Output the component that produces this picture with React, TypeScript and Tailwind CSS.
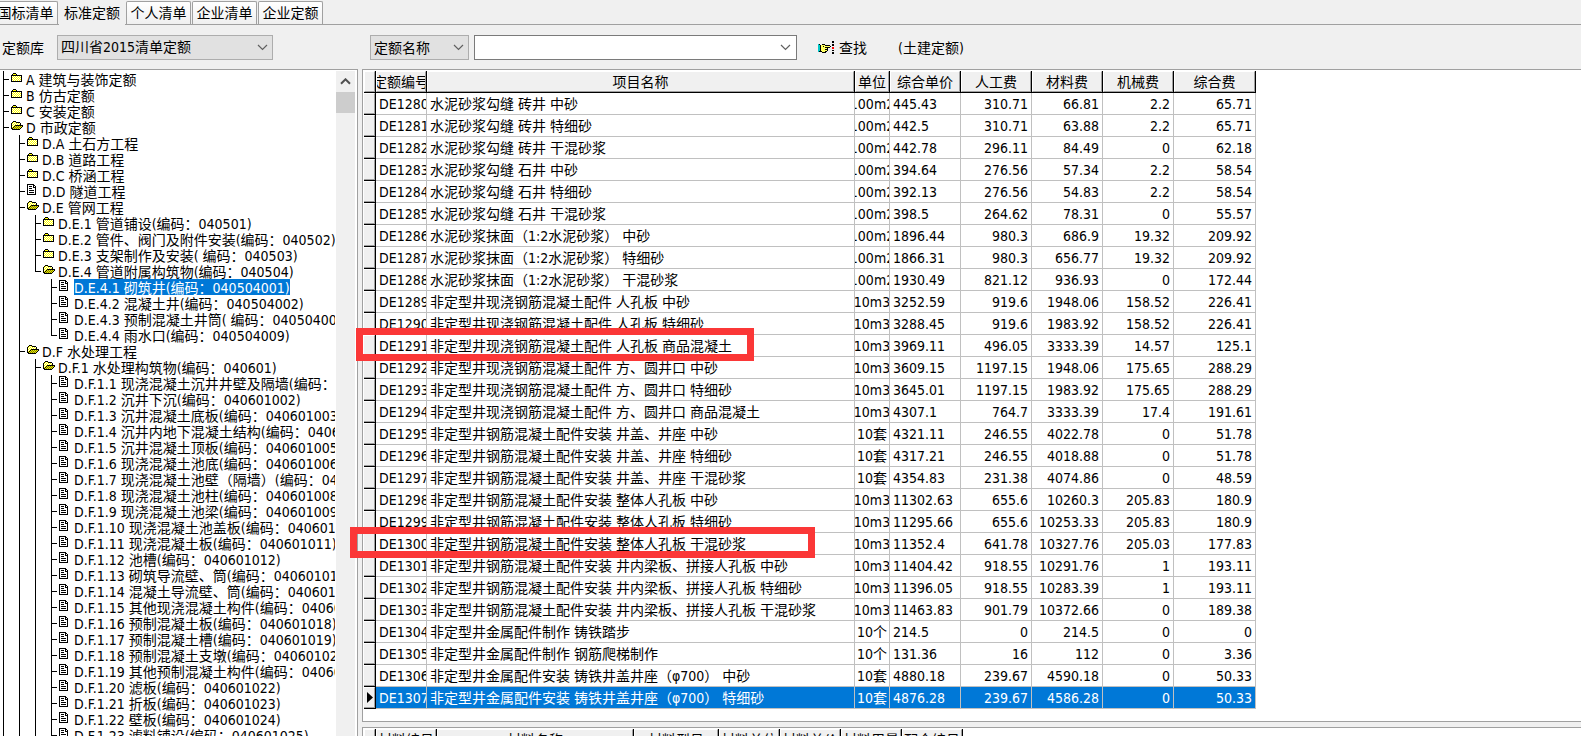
import React, { useState } from "react";

type IconKind = "folder" | "open" | "doc";

interface TreeRow {
  text: string;
  icon: IconKind;
  /** One entry per ancestor level: whether its guide line continues past this row. */
  guides: boolean[];
  last?: boolean;
  selected?: boolean;
}

const underD = [true];
const underDE4 = [true, true, false];
const underDF1 = [true, true, true];

const treeRows: TreeRow[] = [
  { text: "A 建筑与装饰定额", icon: "folder", guides: [] },
  { text: "B 仿古定额", icon: "folder", guides: [] },
  { text: "C 安装定额", icon: "folder", guides: [] },
  { text: "D 市政定额", icon: "open", guides: [] },
  { text: "D.A 土石方工程", icon: "folder", guides: underD },
  { text: "D.B 道路工程", icon: "folder", guides: underD },
  { text: "D.C 桥涵工程", icon: "folder", guides: underD },
  { text: "D.D 隧道工程", icon: "doc", guides: underD },
  { text: "D.E 管网工程", icon: "open", guides: underD },
  { text: "D.E.1 管道铺设(编码：040501)", icon: "folder", guides: [true, true] },
  { text: "D.E.2 管件、阀门及附件安装(编码：040502)", icon: "folder", guides: [true, true] },
  { text: "D.E.3 支架制作及安装( 编码：040503)", icon: "folder", guides: [true, true] },
  { text: "D.E.4 管道附属构筑物(编码：040504)", icon: "open", guides: [true, true], last: true },
  { text: "D.E.4.1 砌筑井(编码：040504001)", icon: "doc", guides: underDE4, selected: true },
  { text: "D.E.4.2 混凝土井(编码：040504002)", icon: "doc", guides: underDE4 },
  { text: "D.E.4.3 预制混凝土井筒( 编码：040504003)", icon: "doc", guides: underDE4 },
  { text: "D.E.4.4 雨水口(编码：040504009)", icon: "doc", guides: underDE4, last: true },
  { text: "D.F 水处理工程", icon: "open", guides: underD },
  { text: "D.F.1 水处理构筑物(编码：040601)", icon: "open", guides: [true, true] },
  { text: "D.F.1.1 现浇混凝土沉井井壁及隔墙(编码：040601001)", icon: "doc", guides: underDF1 },
  { text: "D.F.1.2 沉井下沉(编码：040601002)", icon: "doc", guides: underDF1 },
  { text: "D.F.1.3 沉井混凝土底板(编码：040601003)", icon: "doc", guides: underDF1 },
  { text: "D.F.1.4 沉井内地下混凝土结构(编码：040601004)", icon: "doc", guides: underDF1 },
  { text: "D.F.1.5 沉井混凝土顶板(编码：040601005)", icon: "doc", guides: underDF1 },
  { text: "D.F.1.6 现浇混凝土池底(编码：040601006)", icon: "doc", guides: underDF1 },
  { text: "D.F.1.7 现浇混凝土池壁（隔墙）(编码：040601007)", icon: "doc", guides: underDF1 },
  { text: "D.F.1.8 现浇混凝土池柱(编码：040601008)", icon: "doc", guides: underDF1 },
  { text: "D.F.1.9 现浇混凝土池梁(编码：040601009)", icon: "doc", guides: underDF1 },
  { text: "D.F.1.10 现浇混凝土池盖板(编码：040601010)", icon: "doc", guides: underDF1 },
  { text: "D.F.1.11 现浇混凝土板(编码：040601011)", icon: "doc", guides: underDF1 },
  { text: "D.F.1.12 池槽(编码：040601012)", icon: "doc", guides: underDF1 },
  { text: "D.F.1.13 砌筑导流壁、筒(编码：040601013)", icon: "doc", guides: underDF1 },
  { text: "D.F.1.14 混凝土导流壁、筒(编码：040601014)", icon: "doc", guides: underDF1 },
  { text: "D.F.1.15 其他现浇混凝土构件(编码：040601017)", icon: "doc", guides: underDF1 },
  { text: "D.F.1.16 预制混凝土板(编码：040601018)", icon: "doc", guides: underDF1 },
  { text: "D.F.1.17 预制混凝土槽(编码：040601019)", icon: "doc", guides: underDF1 },
  { text: "D.F.1.18 预制混凝土支墩(编码：040601020)", icon: "doc", guides: underDF1 },
  { text: "D.F.1.19 其他预制混凝土构件(编码：040601021)", icon: "doc", guides: underDF1 },
  { text: "D.F.1.20 滤板(编码：040601022)", icon: "doc", guides: underDF1 },
  { text: "D.F.1.21 折板(编码：040601023)", icon: "doc", guides: underDF1 },
  { text: "D.F.1.22 壁板(编码：040601024)", icon: "doc", guides: underDF1 },
  { text: "D.F.1.23 滤料铺设(编码：040601025)", icon: "doc", guides: underDF1 },
];

type QuotaRow = [string, string, string, string, string, string, string, string];

const quotaRows: QuotaRow[] = [
  ["DE1280", "水泥砂浆勾缝 砖井 中砂", "100m2", "445.43", "310.71", "66.81", "2.2", "65.71"],
  ["DE1281", "水泥砂浆勾缝 砖井 特细砂", "100m2", "442.5", "310.71", "63.88", "2.2", "65.71"],
  ["DE1282", "水泥砂浆勾缝 砖井 干混砂浆", "100m2", "442.78", "296.11", "84.49", "0", "62.18"],
  ["DE1283", "水泥砂浆勾缝 石井 中砂", "100m2", "394.64", "276.56", "57.34", "2.2", "58.54"],
  ["DE1284", "水泥砂浆勾缝 石井 特细砂", "100m2", "392.13", "276.56", "54.83", "2.2", "58.54"],
  ["DE1285", "水泥砂浆勾缝 石井 干混砂浆", "100m2", "398.5", "264.62", "78.31", "0", "55.57"],
  ["DE1286", "水泥砂浆抹面（1:2水泥砂浆） 中砂", "100m2", "1896.44", "980.3", "686.9", "19.32", "209.92"],
  ["DE1287", "水泥砂浆抹面（1:2水泥砂浆） 特细砂", "100m2", "1866.31", "980.3", "656.77", "19.32", "209.92"],
  ["DE1288", "水泥砂浆抹面（1:2水泥砂浆） 干混砂浆", "100m2", "1930.49", "821.12", "936.93", "0", "172.44"],
  ["DE1289", "非定型井现浇钢筋混凝土配件 人孔板 中砂", "10m3", "3252.59", "919.6", "1948.06", "158.52", "226.41"],
  ["DE1290", "非定型井现浇钢筋混凝土配件 人孔板 特细砂", "10m3", "3288.45", "919.6", "1983.92", "158.52", "226.41"],
  ["DE1291", "非定型井现浇钢筋混凝土配件 人孔板 商品混凝土", "10m3", "3969.11", "496.05", "3333.39", "14.57", "125.1"],
  ["DE1292", "非定型井现浇钢筋混凝土配件 方、圆井口 中砂", "10m3", "3609.15", "1197.15", "1948.06", "175.65", "288.29"],
  ["DE1293", "非定型井现浇钢筋混凝土配件 方、圆井口 特细砂", "10m3", "3645.01", "1197.15", "1983.92", "175.65", "288.29"],
  ["DE1294", "非定型井现浇钢筋混凝土配件 方、圆井口 商品混凝土", "10m3", "4307.1", "764.7", "3333.39", "17.4", "191.61"],
  ["DE1295", "非定型井钢筋混凝土配件安装 井盖、井座 中砂", "10套", "4321.11", "246.55", "4022.78", "0", "51.78"],
  ["DE1296", "非定型井钢筋混凝土配件安装 井盖、井座 特细砂", "10套", "4317.21", "246.55", "4018.88", "0", "51.78"],
  ["DE1297", "非定型井钢筋混凝土配件安装 井盖、井座 干混砂浆", "10套", "4354.83", "231.38", "4074.86", "0", "48.59"],
  ["DE1298", "非定型井钢筋混凝土配件安装 整体人孔板 中砂", "10m3", "11302.63", "655.6", "10260.3", "205.83", "180.9"],
  ["DE1299", "非定型井钢筋混凝土配件安装 整体人孔板 特细砂", "10m3", "11295.66", "655.6", "10253.33", "205.83", "180.9"],
  ["DE1300", "非定型井钢筋混凝土配件安装 整体人孔板 干混砂浆", "10m3", "11352.4", "641.78", "10327.76", "205.03", "177.83"],
  ["DE1301", "非定型井钢筋混凝土配件安装 井内梁板、拼接人孔板 中砂", "10m3", "11404.42", "918.55", "10291.76", "1", "193.11"],
  ["DE1302", "非定型井钢筋混凝土配件安装 井内梁板、拼接人孔板 特细砂", "10m3", "11396.05", "918.55", "10283.39", "1", "193.11"],
  ["DE1303", "非定型井钢筋混凝土配件安装 井内梁板、拼接人孔板 干混砂浆", "10m3", "11463.83", "901.79", "10372.66", "0", "189.38"],
  ["DE1304", "非定型井金属配件制作 铸铁踏步", "10个", "214.5", "0", "214.5", "0", "0"],
  ["DE1305", "非定型井金属配件制作 钢筋爬梯制作", "10个", "131.36", "16", "112", "0", "3.36"],
  ["DE1306", "非定型井金属配件安装 铸铁井盖井座（φ700） 中砂", "10套", "4880.18", "239.67", "4590.18", "0", "50.33"],
  ["DE1307", "非定型井金属配件安装 铸铁井盖井座（φ700） 特细砂", "10套", "4876.28", "239.67", "4586.28", "0", "50.33"],
];

const quotaHeaders = ["定额编号", "项目名称", "单位", "综合单价", "人工费", "材料费", "机械费", "综合费"];
const materialHeaders = ["材料编号", "材料名称", "材料型号", "材料单位", "材料单价", "材料用量", "配合编号"];

const cellAlign = [
  "justify-start pl-[3px]",
  "justify-start pl-[3px]",
  "justify-center",
  "justify-start pl-[3px]",
  "justify-end pr-[3px]",
  "justify-end pr-[3px]",
  "justify-end pr-[3px]",
  "justify-end pr-[3px]",
];

function TreeIcon({ kind }: { kind: IconKind }) {
  if (kind === "doc") {
    return (
      <svg width="15" height="16" viewBox="0 0 15 16" shapeRendering="crispEdges" className="shrink-0" aria-hidden="true">
        <path fill="#fff" d="M1 2h6v1h1v1h1v8H1z" />
        <path
          fill="#000"
          d="M0 1h7v1H0zM0 1h1v11H0zM0 11h9v1H0zM8 4h1v8H8zM6 1h1v3H6zM6 4h3v1H6zM7 2h1v1H7zM8 3h1v1H8zM2 3h3v1H2zM2 5h3v1H2zM2 7h5v1H2zM2 9h5v1H2z"
        />
      </svg>
    );
  }
  if (kind === "open") {
    return (
      <svg width="15" height="16" viewBox="0 0 15 16" shapeRendering="crispEdges" className="shrink-0" aria-hidden="true">
        <path fill="url(#dither)" d="M1 3h4v1h4v2H4v1H3v1H2v1H1z" />
        <path
          fill="#000"
          d="M2 2h3v1H2zM1 3h1v1H1zM0 4h1v6H0zM5 3h4v1H5zM9 4h1v2H9zM4 6h8v1H4zM3 7h1v1H3zM2 8h1v1H2zM1 9h1v1H1zM11 7h1v1h-1zM10 8h1v1h-1zM9 9h1v1H9zM1 10h8v1H1z"
        />
        <path fill="#e8e800" d="M4 7h7v1H4zM3 8h7v1H3zM2 9h7v1H2z" />
        <path fill="#808000" d="M5 7h1v1H5zM7 7h1v1H7zM9 7h1v1H9zM4 8h1v1H4zM6 8h1v1H6zM8 8h1v1H8zM3 9h1v1H3zM5 9h1v1H5zM7 9h1v1H7z" />
      </svg>
    );
  }
  return (
    <svg width="15" height="16" viewBox="0 0 15 16" shapeRendering="crispEdges" className="shrink-0" aria-hidden="true">
      <rect x="1" y="4" width="9" height="7" fill="url(#dither)" />
      <rect x="2" y="3" width="3" height="1" fill="#ffff00" />
      <path fill="#000" d="M2 2h3v1H2zM1 3h1v1H1zM5 3h1v1H5zM1 4h9v1H1zM0 4h1v7H0zM10 4h1v7h-1zM0 10h11v1H0z" />
    </svg>
  );
}

function Chevron({ up = false, className = "" }: { up?: boolean; className?: string }) {
  return (
    <svg width="11" height="7" viewBox="0 0 11 7" className={className} aria-hidden="true">
      <path
        d={up ? "M1 5.8 5.5 1.3 10 5.8" : "M1 1 5.5 5.5 10 1"}
        fill="none"
        stroke={up ? "#505050" : "#606060"}
        strokeWidth={up ? 2 : 1.2}
      />
    </svg>
  );
}

function HandIcon() {
  return (
    <svg width="17" height="14" viewBox="0 0 17 14" shapeRendering="crispEdges" aria-hidden="true">
      <path fill="#00c8c8" d="M0 3h2v8H0z" />
      <path fill="#000" d="M1 3h1v1H1zM2 4h1v6H2zM1 10h2v1H1z" />
      <path fill="#ffff60" d="M3 4h4v1h5v1h-3v5H4v-1H3z" />
      <path
        fill="#000"
        d="M4 3h3v1H4zM7 4h5v1H7zM12 5h1v1h-1zM7 6h5v1H7zM9 7h1v1H9zM7 8h3v1H7zM9 9h1v1H9zM7 10h2v1H7zM4 11h4v1H4zM3 10h1v1H3zM5 5h1v1H5z"
      />
      <path fill="#000" d="M14 0h2v2h-2zM14 3h2v2h-2zM14 9h2v1h-2zM14 11h2v2h-2z" />
      <path fill="#f00" d="M14 6h2v2h-2z" />
    </svg>
  );
}

function TreeNode({ row }: { row: TreeRow }) {
  return (
    <li className="flex h-4 pl-[3px]" role="treeitem" aria-selected={!!row.selected}>
      {row.guides.map((on, i) => (
        <span key={i} className={on ? "w-4 shrink-0 border-l border-black" : "w-4 shrink-0"} />
      ))}
      <span className="flex w-2 shrink-0 flex-col">
        <span className="h-[9px] w-1.5 border-b border-l border-black" />
        <span className={row.last ? "flex-1" : "flex-1 border-l border-black"} />
      </span>
      <TreeIcon kind={row.icon} />
      <span className={row.selected ? "bg-[#0078d7] leading-[18px] whitespace-pre text-white" : "leading-[18px] whitespace-pre"}>
        {row.text}
      </span>
    </li>
  );
}

function HeaderCell({ children }: { children?: React.ReactNode }) {
  return (
    <th className="h-[22px] border-r border-b border-black bg-[#f0f0f0] p-0 font-normal">
      <div className="flex h-[21px] items-center justify-center overflow-hidden border-t border-r border-b border-l border-t-white border-r-[#a0a0a0] border-b-[#a0a0a0] border-l-white leading-none whitespace-nowrap">
        {children}
      </div>
    </th>
  );
}

function QuotaTable() {
  const [current, setCurrent] = useState("DE1307");
  return (
    <table className="w-[892px] table-fixed border-separate border-spacing-0">
      <colgroup>
        <col className="w-[12px]" />
        <col className="w-[51px]" />
        <col className="w-[428px]" />
        <col className="w-[35px]" />
        <col className="w-[71px]" />
        <col className="w-[71px]" />
        <col className="w-[71px]" />
        <col className="w-[71px]" />
        <col className="w-[82px]" />
      </colgroup>
      <thead>
        <tr>
          <HeaderCell />
          {quotaHeaders.map((h) => (
            <HeaderCell key={h}>{h}</HeaderCell>
          ))}
        </tr>
      </thead>
      <tbody>
        {quotaRows.map((row) => {
          const active = row[0] === current;
          return (
            <tr key={row[0]} onClick={() => setCurrent(row[0])} className={active ? "bg-[#0078d7] text-white" : "bg-white"}>
              <td className="h-[22px] border-r border-b border-black bg-[#f0f0f0] p-0">
                <div className="flex h-[21px] items-center border-t border-r border-b border-t-white border-r-[#a0a0a0] border-b-[#a0a0a0] pl-[3px]">
                  {active && (
                    <svg width="6" height="11" viewBox="0 0 6 11" aria-hidden="true">
                      <path d="M0 0 6 5.5 0 11z" fill="#000" />
                    </svg>
                  )}
                </div>
              </td>
              {row.map((value, i) => (
                <td key={i} className="h-[22px] border-r border-b border-[#c0c0c0] p-0">
                  <div className={`flex h-[21px] items-center overflow-hidden leading-none whitespace-pre ${cellAlign[i]}`}>
                    {value}
                  </div>
                </td>
              ))}
            </tr>
          );
        })}
      </tbody>
    </table>
  );
}

function MaterialTable() {
  return (
    <table className="w-[599px] table-fixed border-separate border-spacing-0">
      <colgroup>
        <col className="w-[12px]" />
        <col className="w-[61px]" />
        <col className="w-[197px]" />
        <col className="w-[85px]" />
        <col className="w-[61px]" />
        <col className="w-[61px]" />
        <col className="w-[61px]" />
        <col className="w-[61px]" />
      </colgroup>
      <thead>
        <tr>
          <HeaderCell />
          {materialHeaders.map((h) => (
            <HeaderCell key={h}>{h}</HeaderCell>
          ))}
        </tr>
      </thead>
    </table>
  );
}

const tabs = ["国标清单", "标准定额", "个人清单", "企业清单", "企业定额"];

export default function App() {
  const [tab, setTab] = useState("标准定额");
  return (
    <div className="flex h-screen flex-col overflow-hidden bg-[#f0f0f0] font-['DejaVu_Sans_Condensed','Noto_Sans_CJK_SC',sans-serif] text-[14px] text-black">
      <svg width="0" height="0" className="absolute" aria-hidden="true">
        <defs>
          <pattern id="dither" width="2" height="2" patternUnits="userSpaceOnUse">
            <rect width="2" height="2" fill="#ffff00" />
            <rect width="1" height="1" fill="#fff" />
            <rect x="1" y="1" width="1" height="1" fill="#fff" />
          </pattern>
        </defs>
      </svg>

      <nav role="tablist" className="-ml-[7px] flex h-[25px] shrink-0 items-end gap-px border-b border-[#a0a0a0]">
        {tabs.map((t) => (
          <button
            key={t}
            type="button"
            role="tab"
            aria-selected={t === tab}
            onClick={() => setTab(t)}
            className={
              t === tab
                ? "-mb-px h-[25px] w-[66px] bg-[#f0f0f0] leading-none"
                : "h-[23px] w-[65px] rounded-t-[2px] border border-b-0 border-[#a0a0a0] bg-linear-to-b from-white to-[#f0f0f0] leading-none"
            }
          >
            {t}
          </button>
        ))}
      </nav>

      <div className="flex h-11 shrink-0 items-center pl-[2px]">
        <label htmlFor="library" className="w-[55px] pt-[2px]">
          定额库
        </label>
        <div className="relative">
          <select
            id="library"
            className="h-[25px] w-[216px] appearance-none border border-[#adadad] bg-[#e1e1e1] pr-6 pl-[3px] outline-none"
          >
            <option>四川省2015清单定额</option>
          </select>
          <Chevron className="pointer-events-none absolute top-[9px] right-[5px]" />
        </div>
        <div className="relative ml-[97px]">
          <select
            aria-label="查找字段"
            className="h-[25px] w-[99px] appearance-none border border-[#adadad] bg-[#e1e1e1] pt-[2px] pr-6 pl-[3px] outline-none"
          >
            <option>定额名称</option>
          </select>
          <Chevron className="pointer-events-none absolute top-[9px] right-[5px]" />
        </div>
        <div className="ml-[5px] flex h-[25px] w-[323px] items-center border border-[#7a7a7a] bg-white pr-[5px]">
          <input type="text" aria-label="查找内容" className="h-full min-w-0 flex-1 px-1 outline-none" />
          <button type="button" aria-label="展开">
            <Chevron />
          </button>
        </div>
        <button type="button" className="ml-[21px] flex items-center gap-1 pt-[2px]">
          <HandIcon />
          查找
        </button>
        <span className="ml-[31px] pt-[2px]">(土建定额)</span>
      </div>

      <div className="flex min-h-0 flex-1">
        <aside className="flex w-[358px] shrink-0 border-t border-r border-[#a0a0a0] bg-white pr-[2px]">
          <ul role="tree" className="mr-px min-w-0 flex-1 overflow-hidden pt-px">
            {treeRows.map((row) => (
              <TreeNode key={row.text} row={row} />
            ))}
          </ul>
          <div className="mt-px flex w-[19px] shrink-0 flex-col bg-[#f0f0f0]">
            <button type="button" aria-label="向上滚动" className="flex h-[21px] items-center justify-center">
              <Chevron up />
            </button>
            <div className="h-[21px] bg-[#cdcdcd]" />
          </div>
        </aside>

        <main className="relative ml-1 flex min-w-0 flex-1 flex-col gap-[5px]">
          <section className="shrink-0 border border-r-0 border-[#a0a0a0] bg-white pt-px pb-3 pl-px">
            <QuotaTable />
          </section>
          <section className="min-h-0 flex-1 overflow-hidden border-t border-l border-[#a0a0a0] bg-white pt-px pl-px">
            <MaterialTable />
          </section>
          <div className="pointer-events-none absolute top-[259px] -left-[6px] h-[33px] w-[398px] border-[7px] border-[#fb3737]" />
          <div className="pointer-events-none absolute top-[458px] -left-[12px] h-[31px] w-[465px] border-[7px] border-[#fb3737]" />
        </main>
      </div>
    </div>
  );
}
